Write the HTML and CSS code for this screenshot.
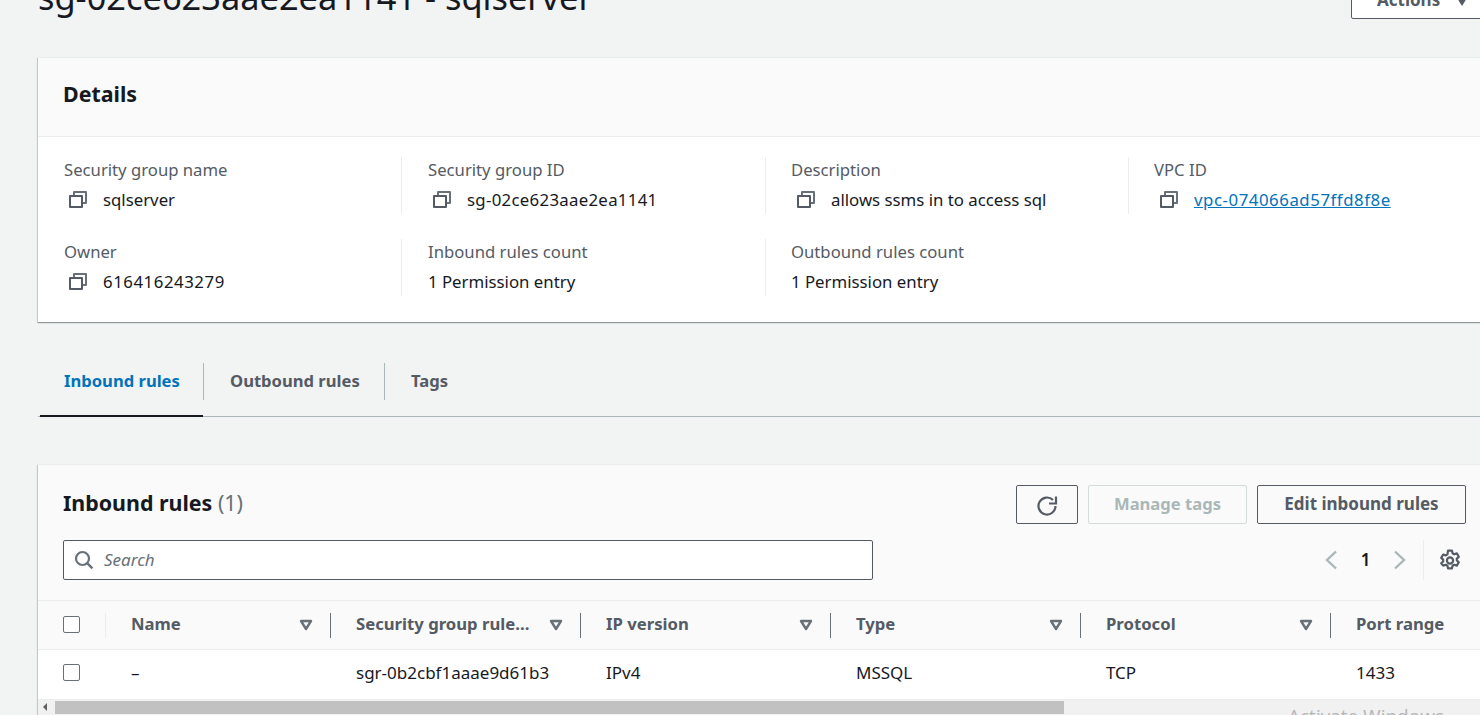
FILE: index.html
```html
<!DOCTYPE html>
<html lang="en">
  <head>
    <meta charset="UTF-8" />
    <title>sg-02ce623aae2ea1141 - sqlserver</title>
    <link rel="stylesheet" href="styles.css">
  </head>
  <body>
    <svg class="icon-defs" width="0" height="0">
      <symbol id="copy" viewBox="0 0 18 17">
        <path d="M1 5h12v11H1z" fill="none" stroke="#545b64" stroke-width="2" stroke-linejoin="round" />
        <path d="M5 4V1h12v11h-3" fill="none" stroke="#687078" stroke-width="2" stroke-linejoin="round" />
      </symbol>
      <symbol id="sort" viewBox="0 0 14 12">
        <path d="M2 2h10l-5 8z" fill="none" stroke="#687078" stroke-width="2.400" stroke-linejoin="round" />
      </symbol>
    </svg>

    <div class="page">
      <div class="title-row">
        <h1>sg-02ce623aae2ea1141 - sqlserver</h1>
        <button class="actions-btn">Actions <span class="caret"></span></button>
      </div>

      <section class="card details">
        <div class="card-head details-head">
          <h2>Details</h2>
        </div>
        <div class="details-grid">
          <div class="field">
            <div class="field-label">Security group name</div>
            <div class="field-value"><svg class="copy-icon"><use href="#copy" /></svg>sqlserver</div>
          </div>
          <div class="field">
            <div class="field-label">Security group ID</div>
            <div class="field-value"><svg class="copy-icon"><use href="#copy" /></svg><span class="id-text">sg-02ce623aae2ea1141</span></div>
          </div>
          <div class="field">
            <div class="field-label">Description</div>
            <div class="field-value"><svg class="copy-icon"><use href="#copy" /></svg>allows ssms in to access sql</div>
          </div>
          <div class="field">
            <div class="field-label">VPC ID</div>
            <div class="field-value"><svg class="copy-icon"><use href="#copy" /></svg><a class="id-wide" href="#">vpc-074066ad57ffd8f8e</a></div>
          </div>
          <div class="field">
            <div class="field-label">Owner</div>
            <div class="field-value"><svg class="copy-icon"><use href="#copy" /></svg><span class="id-wide">616416243279</span></div>
          </div>
          <div class="field">
            <div class="field-label">Inbound rules count</div>
            <div class="field-value">1 Permission entry</div>
          </div>
          <div class="field">
            <div class="field-label">Outbound rules count</div>
            <div class="field-value">1 Permission entry</div>
          </div>
        </div>
      </section>

      <nav class="tabs">
        <a class="tab tab-active" href="#"><span>Inbound rules</span></a>
        <a class="tab tab-out" href="#"><span>Outbound rules</span></a>
        <a class="tab" href="#"><span>Tags</span></a>
      </nav>

      <section class="card rules">
        <div class="card-head rules-head">
          <div class="rules-top">
            <h2>Inbound rules <span class="count">(1)</span></h2>
            <div class="rules-buttons">
              <button class="btn btn-icon" aria-label="Refresh">
                <svg width="22" height="22" viewBox="0 0 22 22">
                  <path d="M19.500 12A8.500 8.500 0 1 1 17 6" fill="none" stroke="#545b64" stroke-width="2.200" />
                  <path d="M20 2.500v7h-7" fill="none" stroke="#545b64" stroke-width="2.200" />
                </svg>
              </button>
              <button class="btn btn-disabled">Manage tags</button>
              <button class="btn btn-edit">Edit inbound rules</button>
            </div>
          </div>
          <div class="rules-filter">
            <label class="search">
              <svg width="20" height="20" viewBox="0 0 20 20">
                <circle cx="8.500" cy="8.500" r="6.500" fill="none" stroke="#687078" stroke-width="2.200" />
                <path d="M13.400 13.400l5 5" fill="none" stroke="#687078" stroke-width="2.400" />
              </svg>
              <span>Search</span>
            </label>
            <div class="pager">
              <svg width="14" height="20" viewBox="0 0 14 20"><path d="M12 1.500L3 10l9 8.500" fill="none" stroke="#aab7b8" stroke-width="2.400" /></svg>
              <span class="page-num">1</span>
              <svg width="14" height="20" viewBox="0 0 14 20"><path d="M2 1.500L11 10l-9 8.500" fill="none" stroke="#aab7b8" stroke-width="2.400" /></svg>
            </div>
            <div class="gear">
              <svg width="22" height="22" viewBox="0 0 20 20">
                <path d="M8.200 1.500h3.600l.5 2.400 1.500.9 2.400-.8 1.800 3.100-1.800 1.600v1.700l1.800 1.600-1.800 3.100-2.400-.8-1.500.9-.5 2.400H8.200l-.5-2.400-1.500-.9-2.400.8L2 13.000l1.800-1.600V9.700L2 8.100l1.800-3.100 2.400.8 1.500-.9z" fill="none" stroke="#545b64" stroke-width="2" stroke-linejoin="round" />
                <circle cx="10" cy="10.500" r="2.800" fill="none" stroke="#545b64" stroke-width="2" />
              </svg>
            </div>
          </div>
        </div>

        <table class="rules-table">
          <colgroup>
            <col class="col-check" /><col class="col-name" /><col class="col-std" /><col class="col-std" /><col class="col-std" /><col class="col-std" /><col class="col-std" />
          </colgroup>
          <thead>
            <tr>
              <th class="check-cell"><span class="checkbox"></span></th>
              <th class="sortable"><span class="th-text">Name</span><svg class="sort-icon"><use href="#sort" /></svg></th>
              <th class="sortable"><span class="th-text">Security group rule...</span><svg class="sort-icon"><use href="#sort" /></svg></th>
              <th class="sortable"><span class="th-text">IP version</span><svg class="sort-icon"><use href="#sort" /></svg></th>
              <th class="sortable"><span class="th-text">Type</span><svg class="sort-icon"><use href="#sort" /></svg></th>
              <th class="sortable"><span class="th-text">Protocol</span><svg class="sort-icon"><use href="#sort" /></svg></th>
              <th><span class="th-text">Port range</span></th>
            </tr>
          </thead>
          <tbody>
            <tr>
              <td class="check-cell"><span class="checkbox"></span></td>
              <td>–</td>
              <td>sgr-0b2cbf1aaae9d61b3</td>
              <td>IPv4</td>
              <td>MSSQL</td>
              <td>TCP</td>
              <td>1433</td>
            </tr>
          </tbody>
        </table>

        <div class="scrollbar">
          <span class="scroll-arrow"></span>
          <span class="scroll-thumb"></span>
        </div>
      </section>
    </div>

    <div class="watermark">Activate Windows</div>
  </body>
</html>
```

FILE: styles.css
```css
html, body {
  margin: 0;
  height: 715px;
  overflow: hidden;
}
body {
  position: relative;
  background-color: #f2f3f3;
  color: #16191f;
  font-family: "Noto Sans", "Open Sans", sans-serif;
  font-size: 17px;
}
.icon-defs {
  position: absolute;
}
.page {
  width: 1540px;
  padding-left: 38px;
}
h1, h2 {
  margin: 0;
}

.title-row {
  display: flex;
  justify-content: space-between;
  height: 76px;
  margin-top: -19px;
}
h1 {
  margin-top: -4px;
  font-size: 34.4px;
  font-weight: 400;
  line-height: 40px;
}
.actions-btn {
  box-sizing: border-box;
  width: 166px;
  height: 38px;
  margin-right: 61px;
  padding: 0 0 2px 25px;
  text-align: left;
  background: #fff;
  border: 1px solid #545b64;
  border-radius: 2px;
  color: #545b64;
  font: 700 17px "Noto Sans", sans-serif;
}
.caret {
  display: inline-block;
  width: 0;
  height: 0;
  margin-left: 12px;
  border-left: 5px solid transparent;
  border-right: 5px solid transparent;
  border-top: 8px solid #545b64;
}

.card {
  background: #fff;
  border-top: 1px solid #eaeded;
  box-shadow: 0 1px 1px 0 rgba(0, 28, 36, 0.3), -1px 1px 1px 0 rgba(0, 28, 36, 0.15);
}
.card-head {
  box-sizing: border-box;
  background: #fafafa;
  border-bottom: 1px solid #eaeded;
}
.details-head {
  height: 79px;
  padding: 21px 25px;
}
h2 {
  font-size: 21.4px;
  font-weight: 700;
  line-height: 30px;
}

.details-grid {
  display: grid;
  grid-template-columns: 363px 364px 363px 352px;
  grid-auto-rows: 82px;
  padding: 20px 0 0;
  height: 165px;
}
.field {
  height: 57px;
  padding-left: 26px;
  border-left: 1px solid #eaeded;
}
.field:nth-child(4n + 1) {
  border-left: 1px solid transparent;
  padding-left: 25px;
}
.field:nth-child(3), .field:nth-child(4), .field:nth-child(7) {
  padding-left: 25px;
}
.field:nth-child(3) .copy-icon, .field:nth-child(4) .copy-icon {
  margin-left: 6px;
}
.field-label {
  color: #545b64;
  font-size: 16.7px;
  line-height: 26px;
}
.field-value {
  display: flex;
  align-items: center;
  height: 30px;
  margin-top: 1px;
  font-size: 16.8px;
}
.id-text {
  letter-spacing: 0.3px;
}
.id-wide {
  letter-spacing: 0.55px;
}
.copy-icon {
  width: 18px;
  height: 17px;
  margin: 0 16px 0 5px;
}
.field-value a {
  color: #0073bb;
}

.tabs {
  display: flex;
  height: 53px;
  margin-top: 41px;
  border-bottom: 1px solid #aab7b8;
}
.tab {
  box-sizing: border-box;
  height: 54px;
  padding: 0 0 0 27px;
  color: #545b64;
  font-size: 16.6px;
  font-weight: 700;
  line-height: 36px;
  text-decoration: none;
  white-space: nowrap;
}
.tab span {
  display: block;
  height: 37px;
}
.tab + .tab {
  position: relative;
}
.tab + .tab::before {
  content: "";
  position: absolute;
  left: 0;
  top: 0;
  width: 1px;
  height: 37px;
  background: #aab7b8;
}
.tab-active {
  width: 163px;
  margin-left: 2px;
  padding-left: 24px;
  color: #0073bb;
  border-bottom: 2px solid #16191f;
}
.tab-out {
  width: 181px;
}

.rules {
  margin-top: 47px;
}
.rules-head {
  height: 136px;
  padding: 20px 0 0 25px;
}
.rules-top {
  display: flex;
  justify-content: space-between;
  height: 55px;
  width: 1403px;
}
.rules-top h2 {
  line-height: 36px;
}
.count {
  color: #687078;
  font-weight: 400;
}
.rules-buttons {
  display: flex;
  gap: 10px;
}
.btn {
  box-sizing: border-box;
  height: 39px;
  padding: 0 0 2px;
  background: transparent;
  border: 1px solid #545b64;
  border-radius: 2px;
  color: #545b64;
  font: 700 17px "Noto Sans", sans-serif;
}
.btn-icon {
  display: flex;
  align-items: center;
  justify-content: center;
  width: 62px;
  padding: 0;
}
.btn-disabled {
  width: 159px;
  font-size: 16.6px;
  color: #aab7b8;
  border-color: #d5dbdb;
}
.btn-edit {
  width: 209px;
}
.rules-filter {
  display: flex;
  align-items: center;
  height: 40px;
}
.search {
  box-sizing: border-box;
  display: flex;
  align-items: center;
  gap: 10px;
  width: 810px;
  height: 40px;
  padding-left: 10px;
  background: #fff;
  border: 1px solid #545b64;
  border-radius: 2px;
  color: #687078;
  font-style: italic;
}
.search span {
  margin-bottom: 2px;
}
.pager {
  display: flex;
  align-items: center;
  margin-left: 451px;
  width: 90px;
  height: 40px;
}
.page-num {
  width: 55px;
  margin-bottom: 2px;
  text-align: center;
  font-weight: 600;
}
.gear {
  display: flex;
  align-items: center;
  height: 40px;
  margin-left: 9px;
  padding-left: 15px;
  border-left: 1px solid #eaeded;
}

.rules-table {
  table-layout: fixed;
  width: 1543px;
  border-collapse: collapse;
}
.col-check {
  width: 68px;
}
.col-name {
  width: 225px;
}
.col-std {
  width: 250px;
}
th {
  position: relative;
  box-sizing: border-box;
  height: 48px;
  padding: 0 0 2px 25px;
  background: #fafafa;
  border-bottom: 1px solid #eaeded;
  color: #545b64;
  font-size: 16.7px;
  font-weight: 700;
  text-align: left;
}
td {
  box-sizing: border-box;
  height: 50px;
  padding: 0 0 3px 25px;
  border-bottom: 1px solid #eaeded;
}
th.check-cell {
  padding-bottom: 0;
}
.sortable::after {
  content: "";
  position: absolute;
  right: 0;
  top: 12px;
  width: 1px;
  height: 25px;
  background: #687078;
}
.check-cell {
  position: relative;
}
th.check-cell::after {
  content: "";
  position: absolute;
  right: 0;
  top: 12px;
  width: 1px;
  height: 25px;
  background: #eaeded;
}
.sort-icon {
  position: absolute;
  right: 18px;
  top: 18px;
  width: 14px;
  height: 12px;
}
.checkbox {
  display: block;
  box-sizing: border-box;
  width: 17px;
  height: 17px;
  background: #fff;
  border: 1px solid #687078;
  border-radius: 2px;
}

.scrollbar {
  display: flex;
  align-items: center;
  height: 15px;
  background: #f1f1f1;
}
.scroll-arrow {
  width: 0;
  height: 0;
  margin-left: 5px;
  border-top: 4px solid transparent;
  border-bottom: 4px solid transparent;
  border-right: 4px solid #606060;
}
.scroll-thumb {
  width: 1009px;
  height: 13px;
  margin-left: 8px;
  background: #c1c1c1;
}

.watermark {
  position: absolute;
  left: 1288px;
  top: 704px;
  color: #b5b5b5;
  font-family: "Open Sans", sans-serif;
  font-size: 19px;
  line-height: 24px;
  white-space: nowrap;
}
```
